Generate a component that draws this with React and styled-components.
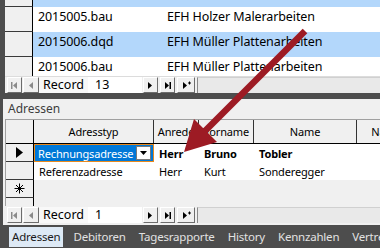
import React from "react";
import styled, { createGlobalStyle } from "styled-components";

const GlobalStyle = createGlobalStyle`
  html, body {
    margin: 0;
    padding: 0;
    background: #4d4d4d;
  }
  * {
    box-sizing: border-box;
  }
`;

const Screen = styled.div`
  position: relative;
  width: 380px;
  height: 248px;
  overflow: hidden;
  background: #4d4d4d;
  display: flex;
  flex-direction: column;
  font-family: "Noto Sans", "Open Sans", sans-serif;
`;

// ---- upper form (file list) ----
const TopPane = styled.div`
  height: 93px;
  margin-left: 5px;
  display: flex;
  flex-direction: column;
  background: #f0f0f0;
`;

const FileRows = styled.div`
  flex: 1;
  display: flex;
  flex-direction: column;
  overflow: hidden;
  border-bottom: 1px solid #dcdcdc;
`;

const FileRow = styled.div`
  display: flex;
  height: ${props => props.h}px;
  flex-shrink: 0;
  background: ${props => props.selected ? "#b3d7fb" : "#ffffff"};
`;

const Selector = styled.div`
  width: ${props => props.w || 28}px;
  flex-shrink: 0;
  background: #f0f0f0;
  border-right: 1px solid #000;
  border-bottom: ${props => props.last ? "none" : "1px solid #3a3a3a"};
  display: flex;
  align-items: center;
  justify-content: center;
`;

const FileCell = styled.div`
  width: ${props => props.w ? props.w + "px" : "auto"};
  flex: ${props => props.w ? "none" : 1};
  padding: 2px 0 0 5px;
  font-size: 12.5px;
  line-height: 16px;
  letter-spacing: -0.1px;
  color: #000;
  white-space: nowrap;
  overflow: hidden;
`;

// ---- record navigation bar ----
const NavBar = styled.div`
  height: 16px;
  flex-shrink: 0;
  display: flex;
  align-items: stretch;
  padding-left: 2px;
  background: #f0f0f0;
`;

const NavButton = styled.div`
  width: ${props => props.w || 15}px;
  margin-right: ${props => props.gap || 0}px;
  background: #f0f0f0;
  border-top: 1px solid #fff;
  border-left: 1px solid #fff;
  border-right: 1px solid #6d6d6d;
  border-bottom: 1px solid #6d6d6d;
  display: flex;
  align-items: center;
  justify-content: center;
  color: ${props => props.disabled ? "#8a8a8a" : "#000"};
`;

const RecordLabel = styled.div`
  width: 49px;
  padding-left: 4px;
  background: #f8f8f8;
  font-size: 12.5px;
  line-height: 16px;
  color: #000;
  white-space: nowrap;
`;

const RecordField = styled.div`
  width: 54px;
  padding-left: 7px;
  background: #fff;
  font-size: 12.5px;
  line-height: 16px;
  color: #000;
  margin-right: 1px;
`;

const ScrollTrack = styled.div`
  flex: 1;
  margin-left: 2px;
  background: #e9e9e9;
  border-left: 1px solid #8a8a8a;
  border-top: 1px solid #d0d0d0;
`;

const DarkBand = styled.div`
  height: 6px;
  flex-shrink: 0;
`;

// ---- subform ----
const SubPanel = styled.div`
  flex: 1;
  margin-left: 3px;
  background: #f0f0f0;
  display: flex;
  flex-direction: column;
  padding-top: 1px;
`;

const SubLabel = styled.div`
  height: 19px;
  padding-left: 5px;
  font-size: 12px;
  line-height: 17px;
  color: #3d3d3d;
`;

const Sheet = styled.div`
  height: 87px;
  margin-left: 2px;
  border-top: 1px solid #a0a0a0;
  border-left: 1px solid #a0a0a0;
  display: flex;
  flex-direction: column;
  overflow: hidden;
`;

const HeaderRow = styled.div`
  height: 24px;
  flex-shrink: 0;
  display: flex;
  border-bottom: 1px solid #000;
`;

const HeaderCell = styled.div`
  width: ${props => props.w}px;
  flex-shrink: 0;
  border-right: 1px solid #333;
  font-size: 11px;
  letter-spacing: -0.15px;
  color: #000;
  display: flex;
  align-items: center;
  justify-content: center;
  white-space: nowrap;
  overflow: hidden;
`;

const DataRow = styled.div`
  height: 18px;
  flex-shrink: 0;
  display: flex;
  background: ${props => props.blank ? "#f0f0f0" : "#fff"};
`;

const DataCell = styled.div`
  width: ${props => props.w}px;
  flex-shrink: 0;
  padding-left: 5px;
  font-size: 11px;
  letter-spacing: -0.15px;
  font-weight: ${props => props.bold ? 700 : 400};
  color: #000;
  display: flex;
  align-items: center;
  white-space: nowrap;
  overflow: hidden;
`;

const Combo = styled.div`
  width: 120px;
  flex-shrink: 0;
  display: flex;
  border: 1px solid #e8891d;
  background: #0078d7;
`;

const ComboText = styled.div`
  flex: 1;
  padding-left: 3px;
  font-size: 11px;
  letter-spacing: -0.15px;
  color: #fff;
  display: flex;
  align-items: center;
  white-space: nowrap;
  overflow: hidden;
`;

const ComboButton = styled.div`
  width: 15px;
  margin: 1px 2px 1px 0;
  background: #fff;
  border: 1px solid #7a7a7a;
  display: flex;
  align-items: center;
  justify-content: center;
`;

const SheetFiller = styled.div`
  flex: 1;
  display: flex;
`;

const SubNav = styled(NavBar)`
  margin-left: 2px;
  margin-top: 1px;
`;

// ---- tabs ----
const TabBar = styled.div`
  height: 23px;
  flex-shrink: 0;
  display: flex;
  align-items: stretch;
  padding: 2px 0 1px 9px;
  gap: 3px;
`;

const Tab = styled.div`
  padding: 0 ${props => props.active ? 3 : 5}px;
  font-size: 11.5px;
  letter-spacing: -0.2px;
  line-height: 20px;
  white-space: nowrap;
  color: ${props => props.active ? "#1a1a1a" : "#e2e2e2"};
  background: ${props => props.active ? "#dde9f5" : "transparent"};
  margin-right: ${props => props.active ? 2 : 0}px;
`;

const ArrowLayer = styled.svg`
  position: absolute;
  left: 0;
  top: 0;
  pointer-events: none;
`;

const NavGlyph = ({ kind }) => {
  const paths = {
    first: <><rect x="1" y="1" width="1.5" height="7" /><path d="M7 1 L3 4.5 L7 8 Z" /></>,
    prev: <path d="M6 1 L2 4.5 L6 8 Z" />,
    next: <path d="M2 1 L6 4.5 L2 8 Z" />,
    last: <><path d="M2 1 L6 4.5 L2 8 Z" /><rect x="6.5" y="1" width="1.5" height="7" /></>,
    new: <><path d="M1 1 L5 4.5 L1 8 Z" /><path d="M6 2 h3 M7.5 0.5 v3" stroke="currentColor" strokeWidth="1" /></>,
  };
  return (
    <svg width="9" height="9" viewBox="0 0 9 9" fill="currentColor">
      {paths[kind]}
    </svg>
  );
};

const NewRowStar = () => (
  <svg width="11" height="11" viewBox="0 0 11 11" stroke="#000" strokeWidth="1">
    <path d="M5.5 0.5 V10.5 M0.5 5.5 H10.5 M2 2 L9 9 M9 2 L2 9" />
  </svg>
);

const Nav = ({ record, Comp = NavBar }) => (
  <Comp>
    <NavButton disabled gap={1}><NavGlyph kind="first" /></NavButton>
    <NavButton disabled w={16}><NavGlyph kind="prev" /></NavButton>
    <RecordLabel>Record</RecordLabel>
    <RecordField>{record}</RecordField>
    <NavButton gap={2}><NavGlyph kind="next" /></NavButton>
    <NavButton gap={2}><NavGlyph kind="last" /></NavButton>
    <NavButton w={18}><NavGlyph kind="new" /></NavButton>
    <ScrollTrack />
  </Comp>
);

const files = [
  { h: 7, name: "", desc: "", selected: true },
  { h: 25, name: "2015005.bau", desc: "EFH Holzer Malerarbeiten" },
  { h: 25, name: "2015006.dqd", desc: "EFH Müller Plattenarbeiten", selected: true },
  { h: 25, name: "2015006.bau", desc: "EFH Müller Plattenarbeiten" },
];

const cols = [
  { key: "typ", label: "Adresstyp", w: 120 },
  { key: "anrede", label: "Anrede", w: 45 },
  { key: "vorname", label: "Vorname", w: 55 },
  { key: "name", label: "Name", w: 103 },
  { key: "name2", label: "Name", w: 60 },
];

const addresses = [
  { typ: "Rechnungsadresse", anrede: "Herr", vorname: "Bruno", name: "Tobler", current: true },
  { typ: "Referenzadresse", anrede: "Herr", vorname: "Kurt", name: "Sonderegger" },
];

const tabs = ["Adressen", "Debitoren", "Tagesrapporte", "History", "Kennzahlen", "Vertreter"];

export default function App() {
  return (
    <>
      <GlobalStyle />
      <Screen>
        <TopPane>
          <FileRows>
            {files.map((f, i) => (
              <FileRow key={i} h={f.h} selected={f.selected}>
                <Selector />
                <FileCell w={129}>{f.name}</FileCell>
                <FileCell>{f.desc}</FileCell>
              </FileRow>
            ))}
          </FileRows>
          <Nav record="13" />
        </TopPane>
        <DarkBand />
        <SubPanel>
          <SubLabel>Adressen</SubLabel>
          <Sheet>
            <HeaderRow>
              <Selector w={28} last />
              {cols.map(c => (
                <HeaderCell key={c.key} w={c.w}>{c.label}</HeaderCell>
              ))}
            </HeaderRow>
            {addresses.map((a, i) => (
              <DataRow key={i}>
                <Selector w={28}>
                  {a.current && (
                    <svg width="7" height="11" viewBox="0 0 7 11"><path d="M0 0 L7 5.5 L0 11 Z" fill="#000" /></svg>
                  )}
                </Selector>
                {a.current ? (
                  <Combo>
                    <ComboText>{a.typ}</ComboText>
                    <ComboButton>
                      <svg width="7" height="4" viewBox="0 0 7 4"><path d="M0 0 H7 L3.5 4 Z" fill="#000" /></svg>
                    </ComboButton>
                  </Combo>
                ) : (
                  <DataCell w={120}>{a.typ}</DataCell>
                )}
                <DataCell w={45} bold={a.current}>{a.anrede}</DataCell>
                <DataCell w={55} bold={a.current}>{a.vorname}</DataCell>
                <DataCell w={103} bold={a.current}>{a.name}</DataCell>
              </DataRow>
            ))}
            <DataRow blank>
              <Selector w={28}>
                <NewRowStar />
              </Selector>
            </DataRow>
            <SheetFiller>
              <Selector w={28} last />
            </SheetFiller>
          </Sheet>
          <Nav record="1" Comp={SubNav} />
        </SubPanel>
        <TabBar>
          {tabs.map((t, i) => (
            <Tab key={t} active={i === 0}>{t}</Tab>
          ))}
        </TabBar>
        <ArrowLayer width="380" height="248" viewBox="0 0 380 248">
          <line x1="305" y1="31" x2="203" y2="133" stroke="#9d1b24" strokeWidth="6.5" />
          <polygon points="184,152 194,119 217,142" fill="#9d1b24" />
        </ArrowLayer>
      </Screen>
    </>
  );
}
